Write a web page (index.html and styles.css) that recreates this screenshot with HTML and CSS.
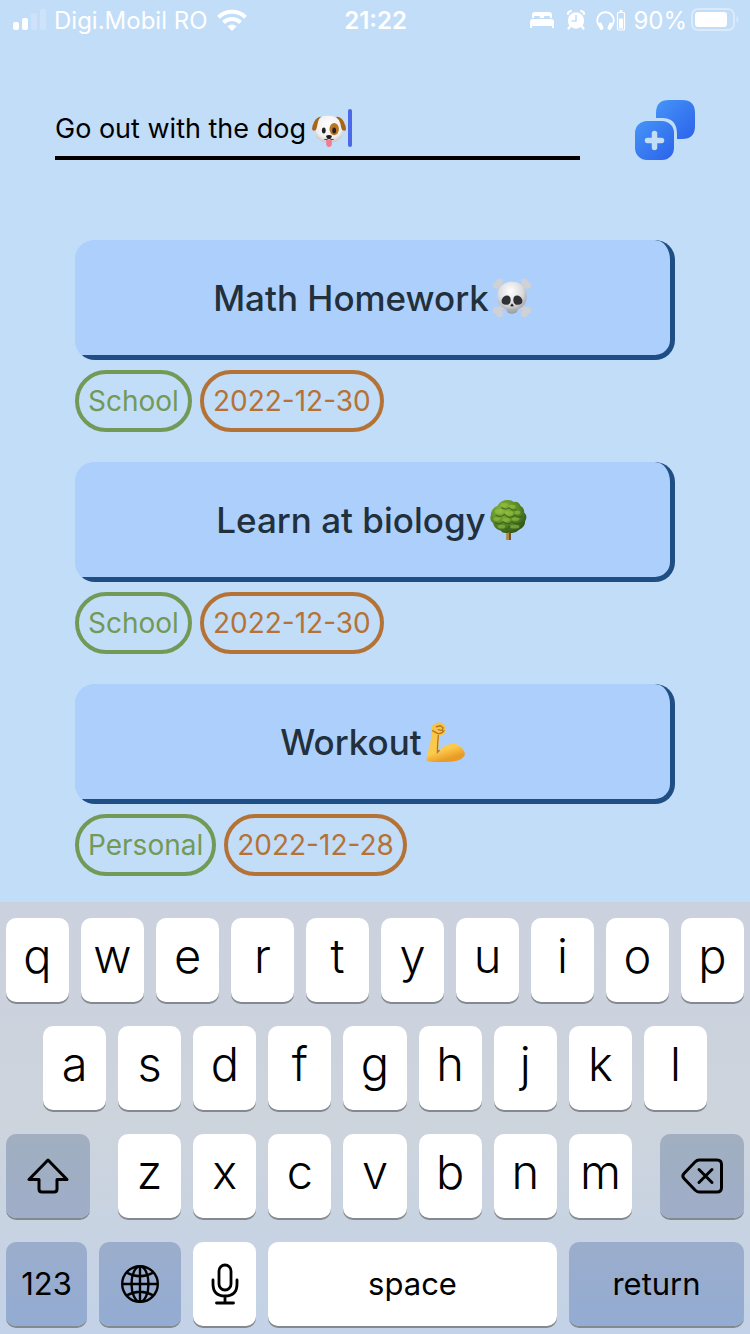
FILE: index.html
```html
<!DOCTYPE html>
<html lang="en">
<head>
<meta charset="utf-8">
<meta name="viewport" content="width=device-width, initial-scale=1">
<title>To-do list</title>
<link rel="stylesheet" href="styles.css">
</head>
<body>
<div class="screen">
  <header class="status">
    <div class="status-side">
      <svg width="34" height="22" viewBox="0 0 34 22" fill="#fff" aria-hidden="true"><rect x="1" y="13" width="6" height="8" rx="2"/><rect x="10" y="9" width="6" height="12" rx="2"/><rect x="19" y="4" width="6" height="17" rx="2" opacity=".2"/><rect x="28" y="0" width="6" height="21" rx="2" opacity=".2"/></svg>
      <span class="carrier">Digi.Mobil RO</span>
      <svg width="30" height="22" viewBox="0 0 30 22" fill="none" stroke="#fff" stroke-width="4" aria-hidden="true"><path d="M1.500 8.300a19.500 19.500 0 0 1 27 0"/><path d="M6.500 13.500a12.200 12.200 0 0 1 17 0"/><path d="M15 22l-4.500-4.600a6.500 6.500 0 0 1 9 0z" fill="#fff" stroke="none"/></svg>
    </div>
    <time class="clock">21:22</time>
    <div class="status-side status-end">
      <svg class="bed" width="24" height="18" viewBox="0 0 24 18" fill="#fff" aria-hidden="true"><path d="M2 7V4q0-3 3-3h14q3 0 3 3v3h-2V6q0-1-1-1h-4q-1 0-1 1v1h-4V6q0-1-1-1H5Q4 5 4 6v1z"/><path d="M3 8h18q3 0 3 3v6h-2v-2H2v2H0v-6q0-3 3-3z"/></svg>
      <svg class="alarm" width="20" height="22" viewBox="0 0 20 22" aria-hidden="true"><circle cx="10" cy="11.500" r="8.200" fill="#fff"/><path d="M2 5Q2 2.500 5 2M18 5Q18 2.500 15 2M4 17.500l-1.500 2M16 17.500l1.500 2" stroke="#fff" stroke-width="2.200" stroke-linecap="round" fill="none"/><path d="M10 6v6H5.500" stroke="#c2ddf8" stroke-width="1.500" fill="none"/></svg>
      <svg width="30" height="22" viewBox="0 0 30 22" fill="none" stroke="#fff" aria-hidden="true"><path d="M3 17Q0 12.500 2 8A8.300 8.300 0 0 1 17 8Q19 12.500 16 17" stroke-width="1.800"/><path d="M4 15.500l1.500 3.500M15 15.500l-1.500 3.500" stroke-width="4" stroke-linecap="round"/><rect x="21.500" y="3.500" width="7" height="17.500" rx="1" stroke-width="1.200"/><path d="M23.500 2h3" stroke-width="1.600"/><path d="M23 9.500h4v10h-4z" fill="#fff" stroke="none"/></svg>
      <span class="percent">90%</span>
      <svg width="48" height="24" viewBox="0 0 48 24" fill="#fff" aria-hidden="true"><rect x="1" y="1" width="42" height="21" rx="6" fill="none" stroke="#fff" stroke-width="2" opacity=".4"/><rect x="4" y="4" width="32" height="15" rx="3"/><path d="M45.500 8v7q2-1 2-3.500t-2-3.500z" opacity=".4"/></svg>
    </div>
  </header>

  <main class="app">
    <form class="composer">
      <label class="field">
        <input class="task-input" type="text" aria-label="New task" value="Go out with the dog">
        <svg class="dog" width="34" height="34" viewBox="0 0 36 36" role="img" aria-label="dog face">
          <defs><radialGradient id="fur" cx=".5" cy=".35" r=".65"><stop offset="0" stop-color="#fff"/><stop offset=".75" stop-color="#f1efed"/><stop offset="1" stop-color="#c9c6c5"/></radialGradient></defs>
          <path d="M10 4Q5 4 2.500 9T0 17q1 3 4 1L11 8z" fill="#a86518"/><path d="M26 4q5 0 7.500 5t2.500 8-4 1L25 8z" fill="#a86518"/>
          <path d="M18 3C10 2 7 5 6 11L4.500 18Q2 23 6 27q5 4.500 12 4.500T30 27q4-4 1.500-9L30 11Q28 3 18 3z" fill="url(#fur)"/>
          <ellipse cx="23.500" cy="17" rx="5" ry="6.500" fill="#b77628"/><ellipse cx="12.500" cy="18.500" rx="2" ry="3.200" fill="#222"/><ellipse cx="23.500" cy="18.500" rx="2" ry="3.200" fill="#222"/>
          <path d="M15 28h6v4q0 4-3 4t-3-4z" fill="#ef7b96"/><path d="M13 28q4 1 5-2 1 3 5 2" stroke="#48342e" fill="none"/><path d="M15 24q3-1.500 6 0 0 3-3 3.500-3-.5-3-3.500z" fill="#1e1c1c"/>
        </svg>
        <span class="caret"></span>
      </label>
      <button class="add" type="button" aria-label="Add task">
        <svg width="60" height="60" viewBox="0 0 60 60" aria-hidden="true">
          <defs><linearGradient id="blue" x1="0" y1="0" x2="1" y2="1"><stop offset="0" stop-color="#4695f8"/><stop offset="1" stop-color="#2b62ea"/></linearGradient></defs>
          <path d="M21 18V13Q21 0 34 0H47Q60 0 60 13V26Q60 39 47 39H42V34Q42 18 27 18z" fill="url(#blue)"/>
          <rect y="21" width="39" height="39" rx="12" fill="url(#blue)"/><path d="M19.500 33.500v14M12.500 40.500h14" stroke="#c2ddf8" stroke-width="5.500" stroke-linecap="round"/>
        </svg>
      </button>
    </form>

    <ul class="tasks">
      <li class="task">
        <h2 class="card"><span class="face">Math Homework
          <svg width="40" height="40" viewBox="0 0 42 42" role="img" aria-label="skull and crossbones">
            <defs><radialGradient id="bone" cx=".45" cy=".3" r=".7"><stop offset="0" stop-color="#fff"/><stop offset=".6" stop-color="#dadadd"/><stop offset="1" stop-color="#96989d"/></radialGradient></defs>
            <g stroke="#cfd0d3" stroke-width="5" stroke-linecap="round"><path d="M6 6l30 29M36 6L6 35"/></g>
            <g fill="#d0d1d4"><circle cx="8" cy="4" r="3.500"/><circle cx="4.500" cy="8" r="3.500"/><circle cx="34" cy="4" r="3.500"/><circle cx="37.500" cy="8" r="3.500"/><circle cx="4.500" cy="34" r="3.500"/><circle cx="8" cy="37.500" r="3.500"/><circle cx="37.500" cy="34" r="3.500"/><circle cx="34" cy="37.500" r="3.500"/></g>
            <path d="M21 4C11 4 5.500 11 5.500 19q0 8 5.500 12 4 1 5 5 5 3 10 0 1-4 5-5 5.500-4 5.500-12C36.500 11 31 4 21 4z" fill="url(#bone)"/>
            <path d="M12 20q4-3 7 0 2 6-2 8-7 1-7-4 0-2 2-4zM30 20q-4-3-7 0-2 6 2 8 7 1 7-4 0-2-2-4z" fill="#303136"/><path d="M21 26.500l2 3q-2 1-4 0z" fill="#222"/><path d="M16 33h10M19 33v3M23 33v3" stroke="#aaa" fill="none"/>
          </svg>
        </span></h2>
        <div class="tags"><span class="tag category">School</span><time class="tag date">2022-12-30</time></div>
      </li>
      <li class="task">
        <h2 class="card"><span class="face">Learn at biology
          <svg width="40" height="40" viewBox="0 0 42 42" role="img" aria-label="tree">
            <defs><radialGradient id="leaf" cx=".35" cy=".3" r=".75"><stop offset="0" stop-color="#8db93b"/><stop offset=".55" stop-color="#5d8d27"/><stop offset="1" stop-color="#2f5518"/></radialGradient></defs>
            <path d="M18 33h5v9h-5z" fill="#b08a45"/><path d="M21 34h2v8h-2z" fill="#73501e"/>
            <path d="M20 0q4 0 6 2 5-1 7 4 4 2 4 7 4 4 1 9 0 6-6 9-5 5-11 3-6 2-9-2-6-1-8-8-4-3-2-8 0-7 7-10 3-6 11-6z" fill="url(#leaf)"/>
            <g fill="#9ac445" opacity=".55"><ellipse cx="16" cy="5" rx="4" ry="2"/><ellipse cx="24" cy="7" rx="4" ry="2"/><ellipse cx="10" cy="12" rx="4" ry="2.500"/><ellipse cx="21" cy="14" rx="4.500" ry="2.500"/><ellipse cx="30" cy="13" rx="3" ry="2"/><ellipse cx="8" cy="20" rx="3.500" ry="2"/><ellipse cx="18" cy="21" rx="4" ry="2"/><ellipse cx="28" cy="20" rx="4" ry="2"/><ellipse cx="13" cy="28" rx="4" ry="2"/><ellipse cx="27" cy="28" rx="5" ry="2"/></g>
            <path d="M13 8q5 3 8 0 4 4 8 2M7 16q6 3 9-1 6 6 11 1 4 3 8 1M6 24q5 2 9-1 5 4 9 0 6 4 12 0M17 31q4-1 5-4" stroke="#315b18" stroke-width="1.300" fill="none" opacity=".7"/>
          </svg>
        </span></h2>
        <div class="tags"><span class="tag category">School</span><time class="tag date">2022-12-30</time></div>
      </li>
      <li class="task">
        <h2 class="card"><span class="face">Workout
          <svg width="40" height="40" viewBox="0 0 42 42" role="img" aria-label="flexed arm">
            <defs><linearGradient id="skin" x1="0" y1="0" x2=".3" y2="1"><stop offset="0" stop-color="#f2c14a"/><stop offset=".75" stop-color="#fdcb4b"/><stop offset="1" stop-color="#e89b25"/></linearGradient></defs>
            <path d="M9 3Q13-1 18 1q5 3 4 7l-2 5q-3 1-5 1-1 7-1 19 4-9 13-10 9-1 13 6 3 4 1 7-4 6-18 6-13 1-21-1-1-5 2-13Q7 17 7 9 6 5 9 3z" fill="url(#skin)"/>
            <path d="M14 14q-1 9-1 18l2-2M8 9q2 1 5 3 5 1 7-3M12 5l4-1 3 2-1 3-4-1" fill="none" stroke="#b87520" stroke-width="1.400" stroke-linecap="round"/>
          </svg>
        </span></h2>
        <div class="tags"><span class="tag category">Personal</span><time class="tag date">2022-12-28</time></div>
      </li>
    </ul>
  </main>

  <section class="keyboard" aria-label="Keyboard">
    <div class="row">
      <button class="key">q</button><button class="key">w</button><button class="key">e</button><button class="key">r</button><button class="key">t</button><button class="key">y</button><button class="key">u</button><button class="key">i</button><button class="key">o</button><button class="key">p</button>
    </div>
    <div class="row row-inset">
      <button class="key">a</button><button class="key">s</button><button class="key">d</button><button class="key">f</button><button class="key">g</button><button class="key">h</button><button class="key">j</button><button class="key">k</button><button class="key">l</button>
    </div>
    <div class="row row-wide-gap">
      <button class="key key-shift" aria-label="Shift"><svg width="42" height="36" viewBox="0 0 42 36" fill="none" stroke="#000" stroke-width="3" stroke-linejoin="round" aria-hidden="true"><path d="M21 2L2 21.500H12V31q0 3 3 3H27q3 0 3-3V21.500H40z"/></svg></button>
      <div class="letters">
        <button class="key">z</button><button class="key">x</button><button class="key">c</button><button class="key">v</button><button class="key">b</button><button class="key">n</button><button class="key">m</button>
      </div>
      <button class="key key-shift" aria-label="Delete"><svg width="42" height="36" viewBox="0 0 42 36" fill="none" stroke="#000" stroke-width="3" stroke-linejoin="round" stroke-linecap="round" aria-hidden="true"><path d="M18 2H36q4.500 0 4.500 4.500v23Q40.500 34 36 34H18q-2 0-4-2L3 20.500q-2.500-2.500 0-5L14 4q2-2 4-2z"/><path d="M18 11.500l13 13M31 11.500l-13 13"/></svg></button>
    </div>
    <div class="row">
      <button class="key key-numbers">123</button>
      <button class="key key-globe" aria-label="Next keyboard"><svg width="40" height="40" viewBox="0 0 40 40" fill="none" stroke="#000" stroke-width="2.400" aria-hidden="true"><circle cx="20" cy="20" r="17.800"/><ellipse cx="20" cy="20" rx="8.500" ry="17.800"/><path d="M20 2v36M2 20h36M6.500 8.500Q20 16 33.500 8.500M6.500 31.500Q20 24 33.500 31.500"/></svg></button>
      <button class="key" aria-label="Dictate"><svg width="28" height="42" viewBox="0 0 28 42" fill="none" stroke="#000" stroke-width="2.800" stroke-linecap="round" aria-hidden="true"><rect x="8" y="2" width="12" height="25" rx="6"/><path d="M2 17v4q0 12 12 12t12-12v-4M14 33v7M5.500 40h17"/></svg></button>
      <button class="key key-space">space</button>
      <button class="key key-return">return</button>
    </div>
  </section>
</div>
</body>
</html>
```
FILE: styles.css
```css
* { box-sizing: border-box; }

body {
  margin: 0;
  background: #c2ddf8;
  font-family: Inter, "Liberation Sans", sans-serif;
}

button { border: 0; padding: 0; font: inherit; color: inherit; cursor: pointer; }
svg { display: block; flex: none; }

.screen { display: flex; flex-direction: column; min-height: 100vh; }

.status {
  display: flex;
  align-items: center;
  height: 40px;
  padding: 0 11px 0 12px;
  color: #fff;
  font-size: 24px;
}
.status-side { display: flex; align-items: center; flex: 1; white-space: nowrap; }
.status-end { justify-content: flex-end; }
.carrier { margin: 0 9px 0 8px; }
.clock { font-weight: 600; }
.alarm { margin: 0 10px 0 12px; }
.percent { margin: 0 4px 0 7px; }

.app { flex: 1; padding: 60px 55px 0; }

.composer { display: flex; justify-content: space-between; gap: 55px; }
.field {
  display: flex;
  align-items: center;
  flex: 1;
  min-width: 0;
  border-bottom: 4px solid #000;
}
.task-input {
  field-sizing: content;
  min-width: 0;
  padding: 0;
  border: 0;
  outline: 0;
  background: none;
  color: #000;
  font: 400 27px Inter, "Liberation Sans", sans-serif;
}
.dog { margin: 4px 2px 0 6px; }
.caret { width: 4px; height: 38px; border-radius: 2px; background: #4a68e8; }
.add { background: none; }

.tasks {
  display: flex;
  flex-direction: column;
  gap: 30px;
  margin: 80px 20px 0;
  padding: 0;
  list-style: none;
}
.card {
  display: flex;
  min-height: 120px;
  margin: 0 0 10px;
  padding: 0 5px 5px 0;
  overflow: hidden;
  border-radius: 20px;
  background:
    linear-gradient(to top, #1f4e85 5px, #adcffc 5px) left / 50% 100% no-repeat,
    linear-gradient(#1f4e85, #1f4e85) right / 50% 100% no-repeat;
}
.face {
  display: flex;
  align-items: center;
  justify-content: center;
  gap: 3px;
  flex: 1;
  border-radius: 0 15px 15px 0 / 0 20px 15px 0;
  background: #adcffc;
  color: #22303c;
  font-size: 35px;
  font-weight: 500;
}
.tags { display: flex; gap: 8px; }
.tag {
  padding: 10px 9px;
  border: 4px solid;
  border-radius: 31px;
  font-size: 28px;
  line-height: 34px;
}
.category { color: #739957; }
.date { color: #b57236; }

.keyboard {
  display: flex;
  flex-direction: column;
  gap: 24px;
  padding: 16px 6px 8px;
  background: linear-gradient(#cbd1de, #cdd4dc 50%, #c3d2e8);
}
.row, .letters { display: flex; gap: 12px; }
.row-inset { padding: 0 37px; }
.row-wide-gap { gap: 28px; }
.letters { flex: 514 1 0; }
.key {
  display: flex;
  align-items: center;
  justify-content: center;
  flex: 63 1 0;
  min-width: 0;
  height: 84px;
  padding-bottom: 10px;
  border-radius: 10px;
  background: #fff;
  box-shadow: 0 2px 0 #84898f;
  color: #000;
  font-size: 47px;
  font-weight: 350;
}
.key svg { margin-top: 10px; }
.key-shift { flex-grow: 84; background: linear-gradient(#a1afc0, #9fadc9); }
.key-numbers, .key-globe, .key-return { background: linear-gradient(#9badcb, #93acd3); }
.key-numbers { flex-grow: 81; }
.key-globe { flex-grow: 82; }
.key-numbers, .key-space, .key-return { padding-bottom: 2px; font-size: 31px; font-weight: 400; }
.key-space { flex-grow: 289; }
.key-return { flex-grow: 175; }
```
